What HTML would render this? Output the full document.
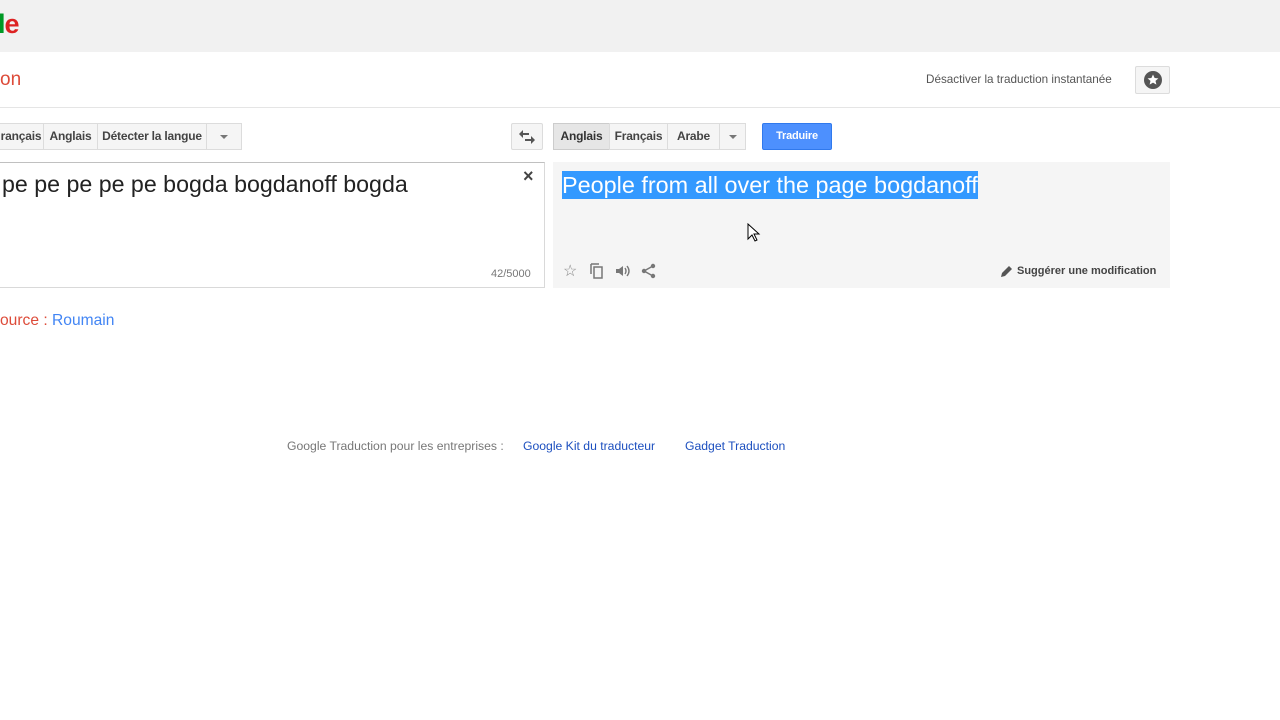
<!DOCTYPE html>
<html><head><meta charset="utf-8"><style>
*{margin:0;padding:0;box-sizing:border-box}
body{width:1280px;height:720px;position:relative;background:#fff;font-family:"Liberation Sans",Arial,sans-serif;overflow:hidden}
.a{position:absolute}
.btn{position:absolute;top:123px;height:27px;border:1px solid #dcdcdc;background:#f5f5f5;font-size:12px;font-weight:bold;color:#444;line-height:25px;text-align:center;letter-spacing:-0.2px}
</style></head><body>
<div class="a" style="left:0;top:0;width:1280px;height:52px;background:#f1f1f1"></div>
<div class="a" style="left:-2px;top:9px;font-size:27px;font-weight:bold;letter-spacing:-1px"><span style="color:#009925">l</span><span style="color:#dd2222">e</span></div>
<div class="a" style="left:0;top:69px;font-size:19px;color:#dd4b39">on</div>
<div class="a" style="left:926px;top:73px;font-size:11.7px;color:#555">Désactiver la traduction instantanée</div>
<div class="a" style="left:1135px;top:66px;width:35px;height:28px;border:1px solid #dcdcdc;background:#f5f5f5;border-radius:2px"></div>
<svg class="a" style="left:1143px;top:70px" width="20" height="20" viewBox="0 0 20 20"><circle cx="10" cy="10" r="9" fill="#555"/><path d="M10 4.5l1.6 3.5 3.8.4-2.9 2.5.9 3.7L10 12.6l-3.4 2 .9-3.7-2.9-2.5 3.8-.4z" fill="#fff"/></svg>
<div class="a" style="left:0;top:107px;width:1280px;height:1px;background:#e5e5e5"></div>
<div class="btn" style="left:-10px;width:54px;padding-left:8px">rançais</div>
<div class="btn" style="left:43px;width:55px">Anglais</div>
<div class="btn" style="left:97px;width:110px">Détecter la langue</div>
<div class="btn" style="left:206px;width:36px"><span style="display:inline-block;border:4px solid transparent;border-top-color:#777;margin-top:11px;vertical-align:top"></span></div>
<div class="btn" style="left:511px;width:32px;border-radius:2px"><svg width="18" height="14" viewBox="0 0 18 14" style="margin-top:6px"><path d="M1 4l4-4v3h6v2H5v3z M17 10l-4 4v-3H7V9h6V6z" fill="#555"/></svg></div>
<div class="btn" style="left:553px;width:57px;background:#e6e6e6;border-color:#ccc;color:#333">Anglais</div>
<div class="btn" style="left:609px;width:59px">Français</div>
<div class="btn" style="left:667px;width:53px">Arabe</div>
<div class="btn" style="left:719px;width:27px"><span style="display:inline-block;border:4px solid transparent;border-top-color:#777;margin-top:11px;vertical-align:top"></span></div>
<div class="btn" style="left:762px;width:70px;background:#4d90fe;border-color:#3079ed;color:#fff;font-size:11px;border-radius:2px">Traduire</div>
<div class="a" style="left:-2px;top:162px;width:547px;height:126px;border:1px solid #d9d9d9;border-top-color:#c0c0c0"></div>
<div class="a" style="left:2px;top:171px;font-size:23.2px;color:#222">pe pe pe pe pe bogda bogdanoff bogda</div>
<div class="a" style="left:523px;top:166px;font-size:18px;color:#444;font-weight:bold">×</div>
<div class="a" style="left:491px;top:268px;font-size:11px;color:#777">42/5000</div>
<div class="a" style="left:553px;top:162px;width:617px;height:126px;background:#f5f5f5"></div>
<div class="a" style="left:562px;top:171px;height:28px;font-size:23.4px;line-height:28px;color:#fff;background:#3399ff">People from all over the page bogdanoff</div>
<div class="a" style="left:563px;top:261px;font-size:16px;color:#888">☆</div>
<svg class="a" style="left:589px;top:262px" width="16" height="18" viewBox="0 0 16 18"><path d="M2 2h8M2 2v10" stroke="#777" stroke-width="1.5" fill="none"/><rect x="5" y="5" width="8" height="11" stroke="#777" stroke-width="1.5" fill="none"/></svg>
<svg class="a" style="left:615px;top:264px" width="16" height="14" viewBox="0 0 16 14"><path d="M1 5h3l4-3v10L4 9H1z" fill="#777"/><path d="M10 4q2 3 0 6M12 2q4 5 0 10" stroke="#777" stroke-width="1.4" fill="none"/></svg>
<svg class="a" style="left:641px;top:263px" width="16" height="16" viewBox="0 0 16 16"><circle cx="12" cy="3" r="2.2" fill="#777"/><circle cx="3" cy="8" r="2.2" fill="#777"/><circle cx="12" cy="13" r="2.2" fill="#777"/><path d="M12 3L3 8l9 5" stroke="#777" stroke-width="1.5" fill="none"/></svg>
<svg class="a" style="left:1000px;top:264px" width="14" height="14" viewBox="0 0 14 14"><path d="M1 13l1-4 7-7 3 3-7 7z" fill="#555"/></svg>
<div class="a" style="left:1017px;top:265px;font-size:11px;font-weight:bold;color:#444">Suggérer une modification</div>
<div class="a" style="left:0;top:312px;font-size:15.6px;color:#dd4b39">ource : <span style="color:#4285f4">Roumain</span></div>
<div class="a" style="left:287px;top:439px;font-size:12.2px;color:#777">Google Traduction pour les entreprises :</div>
<div class="a" style="left:523px;top:439px;font-size:12.2px;color:#1c4fbf">Google Kit du traducteur</div>
<div class="a" style="left:685px;top:439px;font-size:12.2px;color:#1c4fbf">Gadget Traduction</div>
<svg class="a" style="left:747px;top:223px" width="14" height="20" viewBox="0 0 14 20"><path d="M1 1v15l4-4 3 6 2-1-3-6h5z" fill="#fff" stroke="#000" stroke-width="1"/></svg>
</body></html>
